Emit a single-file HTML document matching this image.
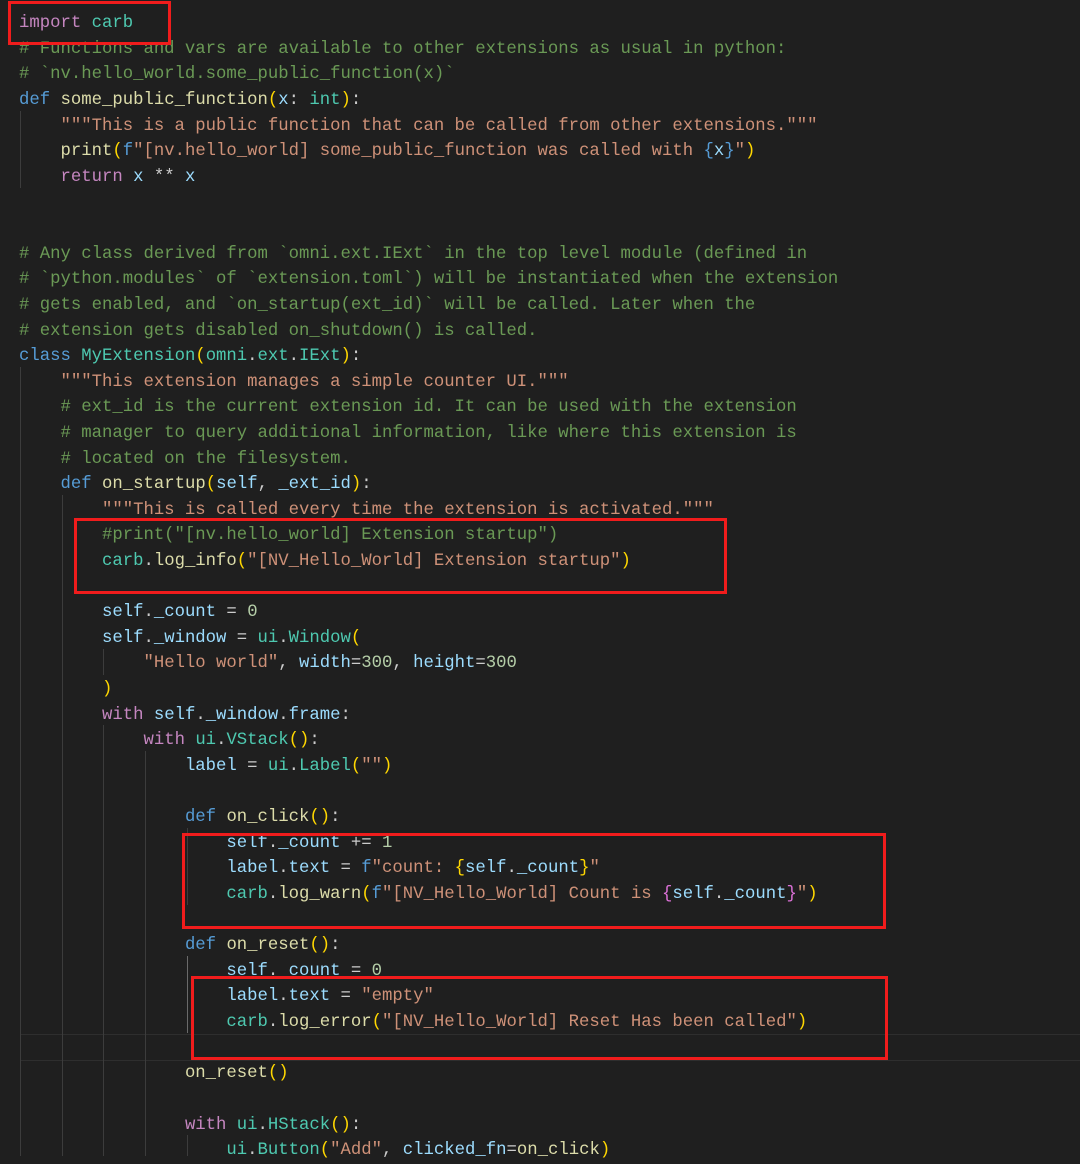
<!DOCTYPE html>
<html><head><meta charset="utf-8"><style>
body{margin:0;width:1080px;height:1156px;background:#1f1f1f;overflow:hidden;position:relative;font-family:"Liberation Mono",monospace;font-size:17.3px;}
.l{position:absolute;left:19px;height:25.6px;line-height:25.6px;white-space:pre;color:#cccccc;margin:3px 0 0 0;}
.k{color:#569cd6}.c{color:#c586c0}.f{color:#dcdcaa}.s{color:#ce9178}.m{color:#6a9955}.v{color:#9cdcfe}.t{color:#4ec9b0}.n{color:#b5cea8}.b{color:#ffd700}.p{color:#da70d6}
.g{position:absolute;width:1px;background:#3c3c3c}
.r{position:absolute;border:3px solid #f01c1c;box-sizing:border-box}
.hl{position:absolute;left:20px;right:0;top:1034px;height:25px;border-top:1px solid #2e2e2e;border-bottom:1px solid #2e2e2e}
</style></head><body>
<div class="hl"></div>
<div class="g" style="left:20px;top:111px;height:77px"></div>
<div class="g" style="left:20px;top:367px;height:789px"></div>
<div class="g" style="left:62px;top:495px;height:661px"></div>
<div class="g" style="left:103px;top:649px;height:26px"></div>
<div class="g" style="left:103px;top:725px;height:431px"></div>
<div class="g" style="left:145px;top:751px;height:405px"></div>
<div class="g" style="left:187px;top:828px;height:77px"></div>
<div class="g" style="left:187px;top:956px;height:77px;background:#6a6a6a"></div>
<div class="g" style="left:187px;top:1135px;height:21px"></div>
<pre class="l" style="top:8px"><span class="c">import</span> <span class="t">carb</span></pre>
<pre class="l m" style="top:34px"># Functions and vars are available to other extensions as usual in python:</pre>
<pre class="l m" style="top:59px"># `nv.hello_world.some_public_function(x)`</pre>
<pre class="l" style="top:85px"><span class="k">def</span> <span class="f">some_public_function</span><span class="b">(</span><span class="v">x</span>: <span class="t">int</span><span class="b">)</span>:</pre>
<pre class="l s" style="top:111px">    """This is a public function that can be called from other extensions."""</pre>
<pre class="l" style="top:136px">    <span class="f">print</span><span class="b">(</span><span class="k">f</span><span class="s">"[nv.hello_world] some_public_function was called with </span><span class="k">{</span><span class="v">x</span><span class="k">}</span><span class="s">"</span><span class="b">)</span></pre>
<pre class="l" style="top:162px">    <span class="c">return</span> <span class="v">x</span> ** <span class="v">x</span></pre>
<pre class="l m" style="top:239px"># Any class derived from `omni.ext.IExt` in the top level module (defined in</pre>
<pre class="l m" style="top:264px"># `python.modules` of `extension.toml`) will be instantiated when the extension</pre>
<pre class="l m" style="top:290px"># gets enabled, and `on_startup(ext_id)` will be called. Later when the</pre>
<pre class="l m" style="top:316px"># extension gets disabled on_shutdown() is called.</pre>
<pre class="l" style="top:341px"><span class="k">class</span> <span class="t">MyExtension</span><span class="b">(</span><span class="t">omni</span>.<span class="t">ext</span>.<span class="t">IExt</span><span class="b">)</span>:</pre>
<pre class="l s" style="top:367px">    """This extension manages a simple counter UI."""</pre>
<pre class="l m" style="top:392px">    # ext_id is the current extension id. It can be used with the extension</pre>
<pre class="l m" style="top:418px">    # manager to query additional information, like where this extension is</pre>
<pre class="l m" style="top:444px">    # located on the filesystem.</pre>
<pre class="l" style="top:469px">    <span class="k">def</span> <span class="f">on_startup</span><span class="b">(</span><span class="v">self</span>, <span class="v">_ext_id</span><span class="b">)</span>:</pre>
<pre class="l s" style="top:495px">        """This is called every time the extension is activated."""</pre>
<pre class="l m" style="top:520px">        #print("[nv.hello_world] Extension startup")</pre>
<pre class="l" style="top:546px">        <span class="t">carb</span>.<span class="f">log_info</span><span class="b">(</span><span class="s">"[NV_Hello_World] Extension startup"</span><span class="b">)</span></pre>
<pre class="l" style="top:597px">        <span class="v">self</span>.<span class="v">_count</span> = <span class="n">0</span></pre>
<pre class="l" style="top:623px">        <span class="v">self</span>.<span class="v">_window</span> = <span class="t">ui</span>.<span class="t">Window</span><span class="b">(</span></pre>
<pre class="l" style="top:648px">            <span class="s">"Hello world"</span>, <span class="v">width</span>=<span class="n">300</span>, <span class="v">height</span>=<span class="n">300</span></pre>
<pre class="l" style="top:674px">        <span class="b">)</span></pre>
<pre class="l" style="top:700px">        <span class="c">with</span> <span class="v">self</span>.<span class="v">_window</span>.<span class="v">frame</span>:</pre>
<pre class="l" style="top:725px">            <span class="c">with</span> <span class="t">ui</span>.<span class="t">VStack</span><span class="b">()</span>:</pre>
<pre class="l" style="top:751px">                <span class="v">label</span> = <span class="t">ui</span>.<span class="t">Label</span><span class="b">(</span><span class="s">""</span><span class="b">)</span></pre>
<pre class="l" style="top:802px">                <span class="k">def</span> <span class="f">on_click</span><span class="b">()</span>:</pre>
<pre class="l" style="top:828px">                    <span class="v">self</span>.<span class="v">_count</span> += <span class="n">1</span></pre>
<pre class="l" style="top:853px">                    <span class="v">label</span>.<span class="v">text</span> = <span class="k">f</span><span class="s">"count: </span><span class="b">{</span><span class="v">self</span>.<span class="v">_count</span><span class="b">}</span><span class="s">"</span></pre>
<pre class="l" style="top:879px">                    <span class="t">carb</span>.<span class="f">log_warn</span><span class="b">(</span><span class="k">f</span><span class="s">"[NV_Hello_World] Count is </span><span class="p">{</span><span class="v">self</span>.<span class="v">_count</span><span class="p">}</span><span class="s">"</span><span class="b">)</span></pre>
<pre class="l" style="top:930px">                <span class="k">def</span> <span class="f">on_reset</span><span class="b">()</span>:</pre>
<pre class="l" style="top:956px">                    <span class="v">self</span>.<span class="v">_count</span> = <span class="n">0</span></pre>
<pre class="l" style="top:981px">                    <span class="v">label</span>.<span class="v">text</span> = <span class="s">"empty"</span></pre>
<pre class="l" style="top:1007px">                    <span class="t">carb</span>.<span class="f">log_error</span><span class="b">(</span><span class="s">"[NV_Hello_World] Reset Has been called"</span><span class="b">)</span></pre>
<pre class="l" style="top:1058px">                <span class="f">on_reset</span><span class="b">()</span></pre>
<pre class="l" style="top:1110px">                <span class="c">with</span> <span class="t">ui</span>.<span class="t">HStack</span><span class="b">()</span>:</pre>
<pre class="l" style="top:1135px">                    <span class="t">ui</span>.<span class="t">Button</span><span class="b">(</span><span class="s">"Add"</span>, <span class="v">clicked_fn</span>=<span class="f">on_click</span><span class="b">)</span></pre>
<div class="r" style="left:8px;top:1px;width:163px;height:44px"></div>
<div class="r" style="left:74px;top:518px;width:653px;height:76px"></div>
<div class="r" style="left:182px;top:833px;width:704px;height:96px"></div>
<div class="r" style="left:191px;top:976px;width:697px;height:84px"></div>
</body></html>
